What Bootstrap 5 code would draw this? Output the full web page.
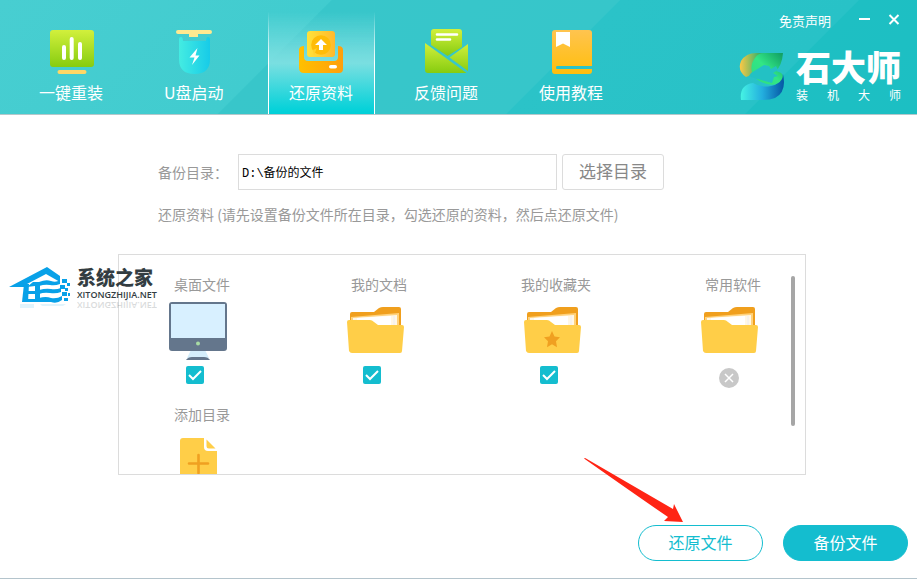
<!DOCTYPE html>
<html lang="zh-CN">
<head>
<meta charset="utf-8">
<meta name="viewport" content="width=device-width, initial-scale=1">
<title>石大师 装机大师</title>
<link href="https://cdn.jsdelivr.net/npm/bootstrap@5.3.0/dist/css/bootstrap.min.css" rel="stylesheet">
<style>
:root { --teal: #14bdcf; --line: #dcdcdc; --ink: #999; }
body { font-family: "Noto Sans CJK SC", sans-serif; font-size: 14px; line-height: 20px; color: var(--ink); background: #fff; }
.app { min-height: 100vh; border-bottom: 1px solid #b4c4cc; }
.top { background: linear-gradient(135deg, #48ced1 0, #41cccf 234px, #38c6ca 235px, #36c6ca 438px, #2bc3c8 439px, #28c2c7 607px, #1ebfc3 608px, #1cbfc3 100%); border-bottom: 1px solid #b4c8cb; padding: 12px 16px 0 18px; }
.tabs { gap: 18px; }
.tab { width: 107px; padding: 17px 0 10px 20px; border: 1px solid transparent; border-width: 0 1px; color: #fff; font-size: 16px; line-height: 24px; text-decoration: none; }
.tab-inner { width: 64px; gap: 5px; }
.tab.active { background: linear-gradient(#8ee5e600 0, #7fe0e2cc 40%, #7adfe1 50%, #08d2d9 95%, #00d0d8 100%); border-image: linear-gradient(#ffffff00, #fff 50%) 1; }
.links { font-size: 13px; line-height: 18px; gap: 28px; }
.links a { color: #fff; text-decoration: none; }
.win { background: none; border: 0; padding: 0; line-height: 0; color: #fff; }
.brand-name { font-size: 35px; line-height: 40px; font-weight: 900; color: #fff; }
.brand-sub { font-size: 12px; line-height: 14px; margin-top: 2px; color: #fff; }
.main { padding: 39px 111px 0 118px; }
.folder-row { padding-left: 40px; }
.folder-row label { width: 80px; }
.path { width: 319px; height: 36px; border: 1px solid var(--line); padding: 0 3px; font: 12px/16px "Liberation Mono", "Noto Sans CJK SC", monospace; color: #000; }
.pick { height: 36px; border: 1px solid var(--line); border-radius: 3px; padding: 0 16px 2px; font-size: 17px; color: #888; background: #fff; margin-left: 5px; }
.hint { padding-left: 40px; margin: 14px 0 30px; }
.panel { height: 221px; border: 1px solid var(--line); padding: 19px 10px 0 48px; overflow: hidden; }
.entries { display: grid; grid-template-columns: repeat(4, 70px); justify-content: space-between; row-gap: 20px; }
.entry { height: 110px; }
.entry label, .entry .title { white-space: nowrap; }
.entry .pic { margin-top: 6px; flex-shrink: 0; }
.tick { width: 18px; height: 18px; margin: 6px 0 0 19px; border: 0; }
.tick[type=checkbox] { border-radius: 2px; }
.tick:checked[type=checkbox] { background-color: var(--teal); background-image: url("data:image/svg+xml,%3csvg xmlns='http://www.w3.org/2000/svg' viewBox='0 0 18 18'%3e%3cpath d='M3 9l4 4 8-8' fill='none' stroke='white' stroke-width='2'/%3e%3c/svg%3e"); }
.drop { width: 20px; margin: 8px 0 0 21px; }
.thumb { width: 4px; height: 150px; border-radius: 2px; background: #a6a6a6; margin: 2px 0 0 23px; }
.actions { padding: 50px 9px 17px; gap: 20px; }
.pill { width: 125px; height: 36px; border-radius: 18px; border: 1px solid var(--teal); font-size: 16px; padding: 0 0 2px; color: var(--teal); background: #fff; }
.pill.full { background: var(--teal); color: #fff; }
.stamp { left: 8px; top: 262px; gap: 5px; }
.stamp-text { padding-top: 2px; }
.stamp-name { font-size: 19px; line-height: 26px; font-weight: 900; color: #333d42; }
.stamp-site { font: 600 9px/10px "Open Sans", sans-serif; color: #333d42; }
.mirror { transform: scaleY(-1); opacity: .18; }
.pointer { right: 234px; bottom: 54px; pointer-events: none; }
</style>
<script src="https://cdn.jsdelivr.net/npm/bootstrap@5.3.0/dist/js/bootstrap.bundle.min.js"></script>
</head>
<body>
<div class="app position-relative d-flex flex-column">
<header class="top d-flex justify-content-between">
  <nav class="tabs d-flex">
    <a class="tab" href="#"><span class="tab-inner d-flex flex-column">
      <svg width="64" height="46" viewBox="0 0 64 46"><defs><linearGradient id="gr" x2="0" y2="1"><stop stop-color="#d2f03c"/><stop offset="1" stop-color="#86cc10"/></linearGradient></defs><rect x="11" y="1" width="44" height="37" rx="3" fill="url(#gr)"/><path d="M25 18v11M32.700 10v19M41 15v14" stroke="#fff" stroke-width="4" stroke-linecap="round"/><rect x="18.500" y="41" width="29" height="4" rx="2" fill="#ffd766"/></svg>
      <span>一键重装</span></span></a>
    <a class="tab" href="#"><span class="tab-inner d-flex flex-column">
      <svg width="64" height="46" viewBox="0 0 64 46"><defs><linearGradient id="us"><stop stop-color="#44ece2"/><stop offset="1" stop-color="#17cbe8"/></linearGradient></defs><path d="M14 1h32q2 0 2 2t-2 2H34v3h-9V5H14q-2 0-2-2t2-2z" fill="#ffe990"/><path d="M15 10q0-2 2-2t2 4h23q0-4 2-4t2 2v20q0 15-15.500 15T15 30z" fill="url(#us)"/><path d="M33.500 19l-8 9.500h5L28 36l7.500-9.500h-4z" fill="#fff"/></svg>
      <span>U盘启动</span></span></a>
    <a class="tab active" href="#" aria-current="page"><span class="tab-inner d-flex flex-column">
      <svg width="64" height="46" viewBox="0 0 64 46"><defs><linearGradient id="or"><stop stop-color="#ffc000"/><stop offset="1" stop-color="#ff9f0c"/></linearGradient><linearGradient id="ye"><stop stop-color="#ffe23a"/><stop offset="1" stop-color="#ffb92c"/></linearGradient></defs><path d="M10 20q1-3 5-3v11q0 4 4 4h26q4 0 4-4V17q5 0 5 4v19q0 4-4 4H15q-5 0-5-5z" fill="url(#or)"/><rect x="18" y="2" width="28" height="26" rx="3" fill="url(#ye)"/><circle cx="32" cy="16" r="9.800" fill="#ffbc08"/><path d="M24 21l4-2-3 7z" fill="#ffd22a"/><path d="M32 10l6 6h-4v5h-4v-5h-4z" fill="#fff"/><rect x="40" y="36" width="8" height="3.600" rx="1.800" fill="#fff"/></svg>
      <span>还原资料</span></span></a>
    <a class="tab" href="#"><span class="tab-inner d-flex flex-column">
      <svg width="64" height="46" viewBox="0 0 64 46"><path d="M17 3q0-3 3-3h25q3 0 3 3v15L33.500 27 17 16z" fill="url(#gr)"/><path d="M11 14l41.500 30H14q-3 0-3-3zM54 15v27L35.500 28.500z" fill="url(#gr)"/><path d="M23 5.500h20M23 10.500h13" stroke="#fff" stroke-width="2.600" stroke-linecap="round"/></svg>
      <span>反馈问题</span></span></a>
    <a class="tab" href="#"><span class="tab-inner d-flex flex-column">
      <svg width="64" height="46" viewBox="0 0 64 46"><defs><linearGradient id="bk" x2="0" y2="1"><stop stop-color="#ffc44f"/><stop offset="1" stop-color="#ffbe0c"/></linearGradient></defs><path d="M16 1h34q3 0 3 3v33H18q-1 0-1 1.500t1 1.500h35v2q0 3-3 3H16q-3 0-3-3V4q0-3 3-3z" fill="url(#bk)"/><path d="M17 3h14v15l-7-3.500-7 3.500z" fill="#fff"/></svg>
      <span>使用教程</span></span></a>
  </nav>
  <div class="d-flex flex-column">
    <div class="links d-flex justify-content-end align-items-center">
      <a href="#">免责声明</a>
      <div class="d-flex align-items-center gap-3">
        <button class="win" type="button" aria-label="最小化"><svg width="12" height="16"><path d="M0 6h11" stroke="#fff" stroke-width="2"/></svg></button>
        <button class="win" type="button" aria-label="关闭"><svg width="14" height="16"><path d="M2.500 2l9 9m0-9l-9 9" stroke="#fff" stroke-width="2"/></svg></button>
      </div>
    </div>
    <div class="d-flex justify-content-end align-items-end mt-3">
      <svg class="me-2" width="50" height="56" viewBox="0 0 50 56"><defs><linearGradient id="l1"><stop stop-color="#ffc844"/><stop offset=".6" stop-color="#5fb764"/><stop offset="1" stop-color="#149a68"/></linearGradient><linearGradient id="l2" x1="1" y1="0" x2="0" y2="1"><stop stop-color="#109c62"/><stop offset=".5" stop-color="#32e685"/><stop offset="1" stop-color="#2edb80"/></linearGradient><linearGradient id="l3"><stop stop-color="#45f3e4"/><stop offset=".5" stop-color="#23aede"/><stop offset="1" stop-color="#0556a4"/></linearGradient></defs><path d="M8 31Q-1 25 3 15 8 7 18 7h10L16 28z" fill="url(#l1)"/><path d="M3 54Q1 39 15 37q8 5 18 3 10-2 12-12 4 18-8 24-5 2-12 2z" fill="url(#l3)"/><path d="M15 29q-4-9 2-17 3-5 9-5h19q-1 12-7 18 9 2 6 8-5 8-15 5-9-2-14-9z" fill="url(#l2)"/><path d="M13 27l13-8 5 1 2 3 5-3 2 4-5 3 5 3-4 1-2 6-18-5-5-2z" fill="#23c1c4"/></svg>
      <div>
        <div class="brand-name">石大师</div>
        <div class="brand-sub d-flex justify-content-between"><span>装</span><span>机</span><span>大</span><span>师</span></div>
      </div>
    </div>
  </div>
</header>

<main class="main">
  <div class="folder-row d-flex align-items-center">
    <label for="path">备份目录：</label>
    <input class="path" id="path" type="text" value="D:\备份的文件">
    <button class="pick" type="button">选择目录</button>
  </div>
  <p class="hint">还原资料 (请先设置备份文件所在目录，勾选还原的资料，然后点还原文件)</p>
  <section class="panel d-flex align-items-start">
    <div class="entries flex-grow-1">
      <div class="entry d-flex flex-column"><label class="d-flex justify-content-center" for="c1">桌面文件</label>
        <svg class="pic" width="70" height="60" viewBox="0 0 70 60"><path d="M24 50h14l4 8H20z" fill="#d4edfb"/><path d="M19 60q2-3 6-3h12q4 0 6 3z" fill="#64768c"/><rect x="2" y="2" width="58" height="49" rx="3" fill="#64768c"/><path d="M4 4h54v34H4z" fill="#d8f0ff"/><circle cx="31" cy="43.500" r="2" fill="#a8dba4"/></svg>
        <input class="tick form-check-input flex-shrink-0" id="c1" type="checkbox" checked></div>
      <div class="entry d-flex flex-column"><label class="d-flex justify-content-center" for="c2">我的文档</label>
        <svg class="pic" width="70" height="60" viewBox="0 0 70 60"><defs><g id="folder"><path d="M6 14q0-2 2-2h22l5-4q2-1 4-1h16q2 0 2 2v30H6z" fill="#f09f1d"/><path d="M7 17l48-4v20H7z" fill="#ffd27c"/><path d="M9 18l44-3v20H9z" fill="#fff7e6"/><path d="M13 18l34-2v20H13z" fill="#fff"/><path d="M50 16v10" stroke="#ececf2"/><path d="M3 22q0-2 2-2h21q2 0 4 2l4 3h24q2 0 2 2l-2 24q0 2-2 2H8q-2 0-3-2z" fill="#ffce48"/></g></defs><use href="#folder"/></svg>
        <input class="tick form-check-input flex-shrink-0" id="c2" type="checkbox" checked></div>
      <div class="entry d-flex flex-column"><label class="d-flex justify-content-center" for="c3">我的收藏夹</label>
        <svg class="pic" width="70" height="60" viewBox="0 0 70 60"><use href="#folder"/><path d="M31 31l2.500 5.500 5.500.7-4 4 1 6-5-3-5 3 1-6-4-4 5.500-.7z" fill="#f0a021"/></svg>
        <input class="tick form-check-input flex-shrink-0" id="c3" type="checkbox" checked></div>
      <div class="entry d-flex flex-column"><span class="title text-center">常用软件</span>
        <svg class="pic" width="70" height="60" viewBox="0 0 70 60"><use href="#folder"/></svg>
        <button class="win drop" type="button" aria-label="移除常用软件"><svg width="20" height="20"><circle cx="10" cy="10" r="10" fill="#c8c8c8"/><path d="M6 6l8 8m0-8l-8 8" stroke="#fff" stroke-width="1.500"/></svg></button></div>
      <div class="entry d-flex flex-column"><span class="title text-center">添加目录</span>
        <svg class="pic" width="70" height="60" viewBox="0 0 70 60"><path d="M13 11q0-3 3-3h21v9q0 4 4 4h9v37H13z" fill="#ffce48"/><path d="M39.500 9.500V16q0 2.500 2.500 2.500h6.500z" fill="#ffce48"/><path d="M31.500 25v18M22 33.500h19" stroke="#f0a021" stroke-width="2.600" stroke-linecap="round"/></svg></div>
    </div>
    <div class="thumb"></div>
  </section>
</main>

<footer class="actions d-flex justify-content-end">
  <button class="pill" type="button">还原文件</button>
  <button class="pill full" type="button">备份文件</button>
</footer>

<div class="stamp position-absolute d-flex">
  <svg width="64" height="50" viewBox="0 0 64 50"><path d="M1 25L39 5l13 9v6L38 12 19 22l-2 3z" fill="#08a1e8"/><path d="M16 22h5l-1 18h-6z" fill="#08a1e8"/><path d="M19 25l6-5h7v20H18v-3h9v-5h-8v-3h8v-5z" fill="#08a1e8"/><path d="M31 20q7-3 12-1t9-1v4q-5 2-10 1t-11 1zM31 28q7-2 12-1t10-1v4q-5 2-11 1t-11 1zM31 36q7-2 12 0 6 1 11-2v4q-5 4-11 2H31z" fill="#08a1e8"/><path d="M54 17h5v4h-5zM59 21h3v3h-3zM52 23h5v4h-5zM57 26h3v3h-3zM54 30h5v4h-5zM60 31h2v3h-2zM56 36h4v3h-4z" fill="#08a1e8"/><path d="M12 42h14v4H12zM32 42h26l-3 2H34z" fill="#08a1e8" opacity=".12"/></svg>
  <div class="stamp-text">
    <div class="stamp-name">系统之家</div>
    <div class="stamp-site">XITONGZHIJIA.NET</div>
    <div class="stamp-site mirror" aria-hidden="true">XITONGZHIJIA.NET</div>
  </div>
</div>

<svg class="pointer position-absolute" width="100" height="67" viewBox="0 0 100 67"><path d="M1 1.500q1-1 2 0L90 52l1-5 9 18-19-1 4-4Q60 43 1 1.500z" fill="#ff2414"/></svg>
</div>
</body>
</html>
